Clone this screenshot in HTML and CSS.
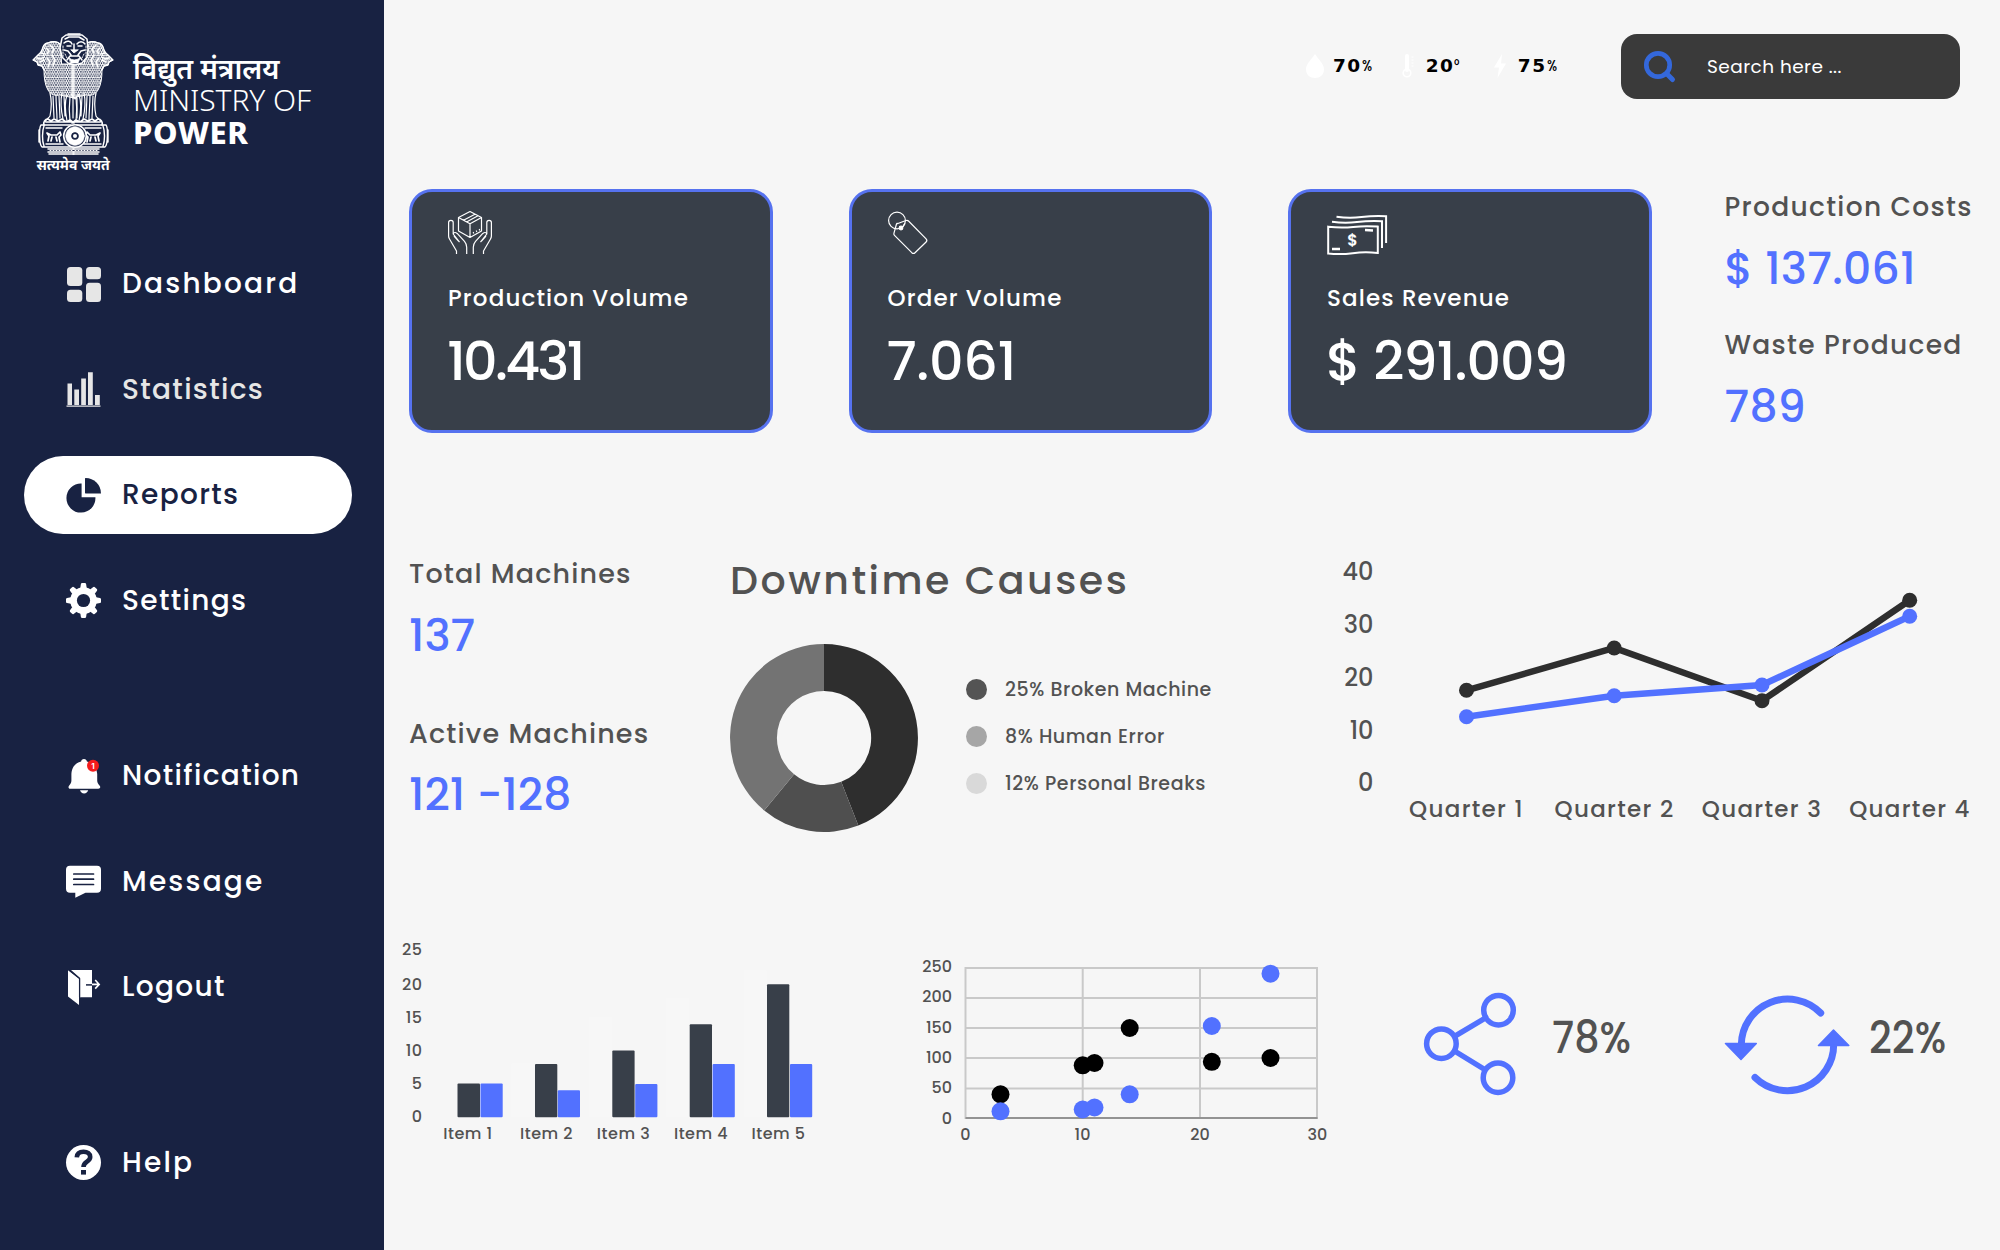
FILE: index.html
```html
<!DOCTYPE html>
<html lang="en">
<head>
<meta charset="utf-8">
<title>Ministry of Power – Reports</title>
<link rel="stylesheet" href="styles.css">
</head>
<body>
<aside class="sidebar">
  <header class="brand">
    <div class="emblem">
      <svg class="emblem-art" viewBox="0 0 80 121" fill="none" stroke="#fff" stroke-width="1" stroke-linecap="round" stroke-linejoin="round">
        <defs>
          <pattern id="fur" width="4.6" height="4.4" patternUnits="userSpaceOnUse">
            <path d="M0 .4q1.6 3.4 2.3 0q.7 3.4 2.3 0M-1.2 2.6q1.8 3.4 2.4 0q1 3.4 2.3 0q.7 3.4 2.3 0" stroke="#fff" stroke-width=".95" fill="none"/>
          </pattern>
          <g id="lion-side">
            <path d="M27 10c-3-3-8-3-12-1c-3 0-5 3-6 7c-1 3-3 4-5 6l-4 4l4 2l1 3l4 1l2 4c0 8 1 15 4 20c3 5 7 6 12 5l14 3V30H29z" fill="url(#fur)"/>
            <path d="M27 10c-3-3-8-3-12-1c-3 0-5 3-6 7c-1 3-3 4-5 6l-4 4l4 2l1 3l4 1l2 4" stroke-width="1.3"/>
            <path d="M4 24l4 1l3-2M8 19l4 1M7 28l4-2M13 14l3 3l-2 3M17 11l4 4l-2 4M14 24l3 4l-2 5M19 21l3 5l-2 6" stroke-width="1.5"/>
            <path d="M17 59c2 8 2 13 0 23c-1 2-4 3-5 6M23 61c0 10 1 16 1 25M29 59c-2 9-1 17 1 26M20 62l1 22M26 62l1 22M34 61c-3 8-2 16 0 26M37 63c-1 8-1 15 0 24M31 62l1 20" stroke-width="1.2"/>
            <path d="M11 91c-1-3 1-6 4-6l3 2l3-2l4 2l4-2l4 3l4-2l4 3M13 88h26" stroke-width="1.6"/>
          </g>
          <g id="base-side">
            <path d="M8 91h30M8 91c-2 2-2 20 1 22h31M6 96v12M11 92c-2 5-2 15 0 20M13 94h16M13 110h17" stroke-width="1.4"/>
            <path d="M15 107l1-5l-2-3l4 2h6l3-3l1 3l-2 2l1 5M18 107l1-4M23 103l1 4" stroke-width="1.7"/>
            <path d="M15 115h26M15 118h26M16 120h25" stroke-width="1.5"/>
            <path d="M17 116.500h24" stroke-dasharray="1 2"/>
          </g>
        </defs>
        <use href="#lion-side"/>
        <use href="#lion-side" transform="matrix(-1 0 0 1 82 0) translate(2)"/>
        <g>
          <path d="M29 4l4-3h16l5 4l1 10l-1 8l-5 6l-7 2l-7-2l-6-6l-2-9z" fill="#182242" stroke-width="1.5"/>
          <path d="M35 0h12M32 5l4-2h10l5 3M31 9c3-3 7-2 8 1M44 10c2-3 6-3 8 0M34 12h4M45 12h4M31 16l4 1l3 4M52 16l-4 1l-3 4M41 10v6M34 26l3-4h9l3 4" stroke-width="1.5"/>
          <path d="M38 16l3 3l4-3zM36 24q5 4 11 0l-2 5h-7z" fill="#fff" stroke-width=".8"/>
          <path d="M30 12v11M53 12v11M32 20l2 4M51 20l-2 4" stroke-dasharray="1.500 1.500"/>
        </g>
        <path d="M38 60l4 5l4-5M40 64v20M44 64v20" stroke-width="1.200"/>
        <use href="#base-side"/>
        <use href="#base-side" transform="matrix(-1 0 0 1 82 0) translate(1)"/>
        <circle cx="42" cy="102" r="11.300" fill="#182242" stroke-width="1.600"/>
        <circle cx="42" cy="102" r="6.500" stroke-width="5.500" stroke-dasharray=".5 1.200"/>
        <circle cx="42" cy="102" r="9.400" stroke-width=".6"/>
        <circle cx="42" cy="102" r="2" fill="#fff" stroke="none"/>
      </svg>
      <span class="motto">सत्यमेव जयते</span>
    </div>
    <div class="ministry">
      <span class="ministry-hi">विद्युत मंत्रालय</span>
      <span class="ministry-en">MINISTRY OF</span>
      <span class="ministry-power">POWER</span>
    </div>
  </header>

  <nav class="nav">
    <div class="nav-group">
      <a class="nav-item">
        <svg class="nav-icon" viewBox="0 0 35 35" fill="#e6e6e6"><rect x="1" y="0" width="15.300" height="19" rx="3.500"/><rect x="20" y="0" width="15" height="12.300" rx="3.500"/><rect x="1" y="22.700" width="15.300" height="12.300" rx="3.500"/><rect x="20" y="15.700" width="15" height="19.300" rx="3.500"/></svg>
        <span class="track-wide">Dashboard</span>
      </a>
      <a class="nav-item nav-item-dim">
        <svg class="nav-icon" viewBox="0 0 35 35" fill="#e6e6e6"><path d="M1.500 11.500h4.500V33H1.500zM8.300 17.500h4.700V33H8.300zM15.200 6.500h4.700V33h-4.700zM22 .3h4.800V33H22zM29 23h4.800v10H29zM.500 33.500h34v1.200H.500z"/></svg>
        <span>Statistics</span>
      </a>
      <a class="nav-item nav-item-active">
        <svg class="nav-icon" viewBox="0 0 35 35" fill="#182242"><path d="M15.600 5.600v13.600h13.800A14.500 14.500 0 1 1 15.600 5.600z"/><path d="M19.600 0A15.400 15.400 0 0 1 35 15.400H19.600q-.6 0-.6-.6V.6q0-.6.6-.6z"/></svg>
        <span>Reports</span>
      </a>
      <a class="nav-item">
        <svg class="nav-icon" viewBox="0 0 35 35"><g fill="#fff"><circle cx="17.500" cy="17.500" r="13.300"/><g id="teeth"><path id="tooth" d="M14.300 5l.6-4q.2-1 1.200-1h2.800q1 0 1.200 1l.6 4zM14.300 30l.6 4q.2 1 1.200 1h2.800q1 0 1.200-1l.6-4z"/><use href="#tooth" transform="rotate(45 17.500 17.500)"/><use href="#tooth" transform="rotate(90 17.500 17.500)"/><use href="#tooth" transform="rotate(135 17.500 17.500)"/></g></g><circle cx="17.500" cy="17.500" r="6.600" fill="#182242"/></svg>
        <span>Settings</span>
      </a>
    </div>
    <div class="nav-group">
      <a class="nav-item">
        <svg class="nav-icon" viewBox="0 0 35 35"><path d="M18 0c1.700 0 2.700 1 2.900 2.400c6.500 1.600 9.700 6.300 10.300 12.600v6.500c0 2 1 3.400 2.500 5.200c1.200 1.600.3 3-1.400 3H4.200c-1.700 0-2.200-1.600-1.200-3c1.500-1.800 2.400-3.200 2.400-5.200V15C5.800 8.600 9 4 15.100 2.400C15.300 1 16.300 0 18 0zM14 31.200h8.200c-.6 2-2 3.200-4.100 3.200S14.600 33.200 14 31.200z" fill="#fff"/><circle cx="27" cy="6.700" r="6" fill="#f41c1c"/><text class="badge-num" x="27" y="9.800" text-anchor="middle">1</text></svg>
        <span>Notification</span>
      </a>
      <a class="nav-item">
        <svg class="nav-icon" viewBox="0 0 35 35"><path d="M4 1.700h27q4 0 4 4v19q0 4-4 4H19.500L9.300 33.800v-5.100H4q-4 0-4-4v-19q0-4 4-4z" fill="#fff"/><path d="M7.800 10h19.700M7.800 15.200h19.700M7.800 20.500h19.700" stroke="#182242" stroke-width="1.700" stroke-linecap="round"/></svg>
        <span class="track-wide">Message</span>
      </a>
      <a class="nav-item">
        <svg class="nav-icon" viewBox="0 0 35 35"><path d="M5 0h21v27.300H14V8z" fill="#fff"/><path d="M2 0l11 8.600V35L2 26.500z" fill="#fff"/><path d="M2.500-.2L13.600 8.500V27" fill="none" stroke="#182242" stroke-width="1.300"/><path d="M20 14.900h6" stroke="#182242" stroke-width="1.500"/><path d="M26 14.400h7M29.200 10l4 4.400l-4 4.200" fill="none" stroke="#fff" stroke-width="1.600"/></svg>
        <span>Logout</span>
      </a>
    </div>
    <div class="nav-group">
      <a class="nav-item">
        <svg class="nav-icon" viewBox="0 0 35 35"><circle cx="17.500" cy="17.500" r="17.500" fill="#fff"/><path d="M10.800 12.300c.3-4.200 3-5.500 6.700-5.500c4 0 6.700 1.900 6.700 5.200c0 5.200-6.700 4.200-6.700 10" fill="none" stroke="#182242" stroke-width="4.600"/><path d="M15 25h5v4.600h-5z" fill="#182242"/></svg>
        <span class="track-wide">Help</span>
      </a>
    </div>
  </nav>
</aside>

<main class="main">
  <div class="topbar">
    <div class="weather">
      <div class="reading"><svg class="reading-icon" viewBox="0 0 18 24" fill="#fff"><path d="M9 0c3 5 9 9.500 9 15.500C18 20.500 14 24 9 24S0 20.500 0 15.500C0 9.500 6 5 9 0z"/></svg><b>70</b><small>%</small></div>
      <div class="reading reading-temp"><svg class="reading-icon" viewBox="0 0 18 24"><path d="M8 2v14" stroke="#fff" stroke-width="4" stroke-linecap="round"/><circle cx="8" cy="19" r="3.800" fill="none" stroke="#fff" stroke-width="1.600"/><path d="M12.500 3h2M12.500 6h2M12.500 9h2M12.500 12h2" stroke="#fff"/></svg><b>20</b><small>°</small></div>
      <div class="reading"><svg class="reading-icon" viewBox="0 0 18 24" fill="#fff"><path d="M11 0L3 13.500h5L6.500 24L15 9.500h-5z"/></svg><b>75</b><small>%</small></div>
    </div>
    <div class="search">
      <svg class="search-icon" viewBox="0 0 32 32" fill="none" stroke="#3468db"><circle cx="14" cy="14" r="11.700" stroke-width="4.700"/><path d="M23 23l5.500 5.500" stroke-width="5" stroke-linecap="round"/></svg>
      <span>Search here ...</span>
    </div>
  </div>

  <section class="cards">
    <article class="card">
      <svg class="card-icon" viewBox="0 0 46 50" fill="none" stroke="#fff" stroke-width="1.200" stroke-linejoin="round">
        <path d="M22 3.500l11.500 6v13.500L22 29.500L10.500 23V9.500zM10.500 9.500L22 15.700l11.500-6.200M22 15.700v13.800M15 12.500l12-6.300M18.500 14L30 7.700"/><path d="M25 25l1-.5M28 23.500l1-.5M31 22l1-.5" stroke-width="1.500"/>
        <g id="hand"><path d="M8.500 46v-3L1.500 31q-.9-1.500-.9-3V14.500q0-2.200 2.300-2.200t2.300 2.200V26l6.300 8.200M5.200 26q1.200-2.700 4-.6l7.300 7.900q2.200 2.600 2.200 6V46M6 28l4.500 5"/></g>
        <use href="#hand" transform="matrix(-1 0 0 1 44 0)"/>
      </svg>
      <h2>Production Volume</h2>
      <p class="value-ones">10.431</p>
    </article>
    <article class="card">
      <svg class="card-icon" viewBox="0 0 46 50" fill="none" stroke="#fff" stroke-width="1.200" stroke-linejoin="round">
        <circle cx="9" cy="12.500" r="8.400"/><path d="M8.500 16L18 12.500q1.500-.5 2.500.5l17.600 17.800q1.500 1.700 0 3.200L27 44.700q-1.500 1.500-3.200 0L6.500 27.300q-.8-.8-.6-2zq.3-.8 1-1" /><circle cx="13" cy="20" r="1.800" fill="#fff"/><path d="M13 20q2.500-1 4-4.500"/>
      </svg>
      <h2>Order Volume</h2>
      <p>7.061</p>
    </article>
    <article class="card">
      <svg class="card-icon card-icon-cash" viewBox="0 0 62 50" fill="none" stroke="#fff" stroke-width="2">
        <path d="M1 19q12-1.500 24 0t25-1v35"  stroke="none"/>
        <path d="M1.200 19.500q12 2 24 0t25-1v35.500" stroke="none"/>
        <path d="M1.200 18.700q13 1.500 25 .2t24.600-.3V45q-13-1.400-25 .2t-24.600 .4z"/>
        <path d="M5 13.800q13 1.600 25 .2t25-.8V40"/><path d="M9.500 8.800q13 1.600 25 .2t24.600-.8V35"/>
        <path d="M38 22l8 .5M5 41h8" stroke-width="2.400"/>
        <text class="cash-sign" x="25.500" y="38" text-anchor="middle">$</text>
      </svg>
      <h2>Sales Revenue</h2>
      <p class="value-money">$ 291.009</p>
    </article>
    <div class="metrics metrics-costs">
      <h3>Production Costs</h3>
      <p>$ 137.061</p>
      <h3>Waste Produced</h3>
      <p>789</p>
    </div>
  </section>

  <section class="insights">
    <div class="metrics metrics-machines">
      <h3>Total Machines</h3>
      <p>137</p>
      <h3>Active Machines</h3>
      <p>121 -128</p>
    </div>
    <div class="downtime">
      <h1>Downtime Causes</h1>
      <div class="downtime-body">
        <svg class="donut" viewBox="-94 -94 188 188">
          <path d="M0-94A94 94 0 0 1 34.300 87.500L17.200 43.800A47 47 0 0 0 0-47z" fill="#2e2e2e"/>
          <path d="M34.300 87.500A94 94 0 0 1-59.800 72.500L-29.900 36.300A47 47 0 0 0 17.200 43.800z" fill="#4f4f4f"/>
          <path d="M-59.800 72.500A94 94 0 0 1 0-94V-47A47 47 0 0 0-29.900 36.300z" fill="#737373"/>
        </svg>
        <ul class="legend">
          <li><i class="dot dot-dark"></i>25% Broken Machine</li>
          <li><i class="dot dot-mid"></i>8% Human Error</li>
          <li><i class="dot dot-light"></i>12% Personal Breaks</li>
        </ul>
      </div>
    </div>
    <svg class="chart line-chart" viewBox="1330 550 650 290">
      <g class="axis axis-y" text-anchor="end"><text x="1373.500" y="580">40</text><text x="1373.500" y="633">30</text><text x="1373.500" y="686">20</text><text x="1373.500" y="738.500">10</text><text x="1373.500" y="790.500">0</text></g>
      <g class="axis axis-x" text-anchor="middle"><text x="1466.500" y="817.300">Quarter 1</text><text x="1614.500" y="817.300">Quarter 2</text><text x="1762" y="817.300">Quarter 3</text><text x="1910" y="817.300">Quarter 4</text></g>
      <g fill="#2e2e2e"><path d="M1466.500 690.300L1614.200 648L1762 700.700L1909.700 600.300" fill="none" stroke="#2e2e2e" stroke-width="6.500"/><circle cx="1466.500" cy="690.300" r="7.500"/><circle cx="1614.200" cy="648" r="7.500"/><circle cx="1762" cy="700.700" r="7.500"/><circle cx="1909.700" cy="600.300" r="7.500"/></g>
      <g fill="#5271ff"><path d="M1466.500 716.700L1614.200 695.700L1762 685L1909.700 616.300" fill="none" stroke="#5271ff" stroke-width="6.500"/><circle cx="1466.500" cy="716.700" r="7.500"/><circle cx="1614.200" cy="695.700" r="7.500"/><circle cx="1762" cy="685" r="7.500"/><circle cx="1909.700" cy="616.300" r="7.500"/></g>
    </svg>
  </section>

  <section class="bottom">
    <svg class="chart bar-chart" viewBox="395 930 430 220">
      <g class="tick" text-anchor="end"><text x="422.500" y="955">25</text><text x="422.500" y="989.500">20</text><text x="422.500" y="1022.500">15</text><text x="422.500" y="1055.500">10</text><text x="422.500" y="1088.500">5</text><text x="422.500" y="1121.500">0</text></g>
      <g fill="#f7f7f7"><path d="M511.500 1063.500h22.500v53.800h-22.500zM589 1017h22.500v100.300H589zM666.500 998h22.500v119.300h-22.500zM744 970.500h22.500v146.800H744z"/></g>
      <g fill="#383f49"><rect x="457.500" y="1083.500" width="22.500" height="33.800" rx="1"/><rect x="535" y="1063.900" width="22.300" height="53.400" rx="1"/><rect x="612.300" y="1050.500" width="22.300" height="66.800" rx="1"/><rect x="689.700" y="1024.200" width="22.300" height="93.100" rx="1"/><rect x="767" y="984.200" width="22.300" height="133.100" rx="1"/></g>
      <g fill="#5271ff"><rect x="480.500" y="1083.500" width="22.200" height="33.800" rx="1"/><rect x="557.800" y="1090.300" width="22.200" height="27" rx="1"/><rect x="635.200" y="1084" width="22.200" height="33.300" rx="1"/><rect x="712.600" y="1064" width="22.200" height="53.300" rx="1"/><rect x="790" y="1064" width="22.200" height="53.300" rx="1"/></g>
      <g class="tick" text-anchor="middle"><text x="468" y="1139">Item 1</text><text x="546.500" y="1139">Item 2</text><text x="623.500" y="1139">Item 3</text><text x="701" y="1139">Item 4</text><text x="778.500" y="1139">Item 5</text></g>
    </svg>
    <svg class="chart scatter-chart" viewBox="915 950 420 200">
      <g stroke="#c9c9c9" stroke-width="2" fill="none"><path d="M965.500 968H1317.500M965.500 998H1317.500M965.500 1028H1317.500M965.500 1058H1317.500M965.500 1088.500H1317.500"/><path d="M965.500 967V1119M1082.700 967V1119M1200 967V1119M1317 967V1119"/></g>
      <path d="M965.500 1118H1317.500" stroke="#939393" stroke-width="2"/>
      <g class="tick" text-anchor="end"><text x="952" y="972.300">250</text><text x="952" y="1002.300">200</text><text x="952" y="1033">150</text><text x="952" y="1063">100</text><text x="952" y="1093">50</text><text x="952" y="1123.500">0</text></g>
      <g class="tick" text-anchor="middle"><text x="965.500" y="1140">0</text><text x="1082.500" y="1140">10</text><text x="1200" y="1140">20</text><text x="1317.500" y="1140">30</text></g>
      <g fill="#000"><circle cx="1000.500" cy="1094.300" r="9"/><circle cx="1082.700" cy="1065.300" r="9"/><circle cx="1094.500" cy="1063" r="9"/><circle cx="1129.700" cy="1028" r="9"/><circle cx="1211.800" cy="1061.800" r="9"/><circle cx="1270.500" cy="1058" r="9"/></g>
      <g fill="#5271ff"><circle cx="1000.500" cy="1111.300" r="9"/><circle cx="1082.700" cy="1109.500" r="9"/><circle cx="1094.500" cy="1107.500" r="9"/><circle cx="1129.700" cy="1094.300" r="9"/><circle cx="1211.800" cy="1026" r="9"/><circle cx="1270.500" cy="973.700" r="9"/></g>
    </svg>
    <div class="rate rate-share">
      <svg class="rate-icon" viewBox="1422 992 96 104" fill="none" stroke="#5271ff" stroke-width="5.500"><circle cx="1441.400" cy="1043.700" r="14.800"/><circle cx="1498.500" cy="1010.200" r="14.800"/><circle cx="1498" cy="1077.700" r="14.800"/><path d="M1454.500 1036.300L1485.500 1018M1454.500 1051L1485.500 1070"/></svg>
      <span>78%</span>
    </div>
    <div class="rate rate-cycle">
      <svg class="rate-icon rate-icon-cycle" viewBox="1723 992 130 104" fill="none" stroke="#5271ff" stroke-width="7"><path d="M1820.700 1013A46.300 46.300 0 0 0 1741.300 1045M1755 1077.500A46.300 46.300 0 0 0 1833.700 1044" stroke-linecap="round"/><path d="M1725.500 1043.500H1756.300L1741 1059.500zM1818.500 1045.500H1848.800L1833.500 1030z" fill="#5271ff" stroke-width="1.500" stroke-linejoin="round"/></svg>
      <span>22%</span>
    </div>
  </section>
</main>
</body>
</html>
```
FILE: styles.css
```css
* { box-sizing: border-box; margin: 0; padding: 0; }

body {
  display: flex;
  width: 2000px;
  height: 1250px;
  overflow: hidden;
  background: #f6f6f6;
  color: #525252;
  font-family: Poppins, Inter, sans-serif;
  font-weight: 500;
  font-feature-settings: "cv11";
}

svg { display: block; flex: none; overflow: visible; }
h1, h2, h3 { font-weight: 500; white-space: nowrap; }
p, span { white-space: nowrap; }

/* Sidebar */
.sidebar {
  flex: none;
  width: 384px;
  padding-top: 34px;
  background: #182242;
  color: #fff;
}

.brand { display: flex; height: 211px; padding-left: 33px; }
.emblem { width: 80px; }
.emblem-art { width: 80px; height: 121px; }
.motto {
  display: block;
  margin-top: -1px;
  font: 700 14px/22px "Noto Sans", sans-serif;
  text-align: center;
}
.ministry {
  display: flex;
  flex-direction: column;
  padding: 18px 0 0 20px;
  font-family: "Noto Sans", sans-serif;
  line-height: 32px;
}
.ministry-hi { font-size: 28px; font-weight: 600; }
.ministry-en { font-size: 30px; font-weight: 300; letter-spacing: -.1px; }
.ministry-power { font-size: 31px; font-weight: 800; letter-spacing: .6px; }

.nav-group { display: flex; flex-direction: column; gap: 27.500px; }
.nav-group + .nav-group { margin-top: 97.500px; }
.nav-item {
  display: flex;
  align-items: center;
  gap: 21px;
  width: 328px;
  height: 78px;
  margin-left: 24px;
  padding-left: 42px;
  border-radius: 39px;
  font-size: 28px;
  letter-spacing: 1.350px;
}
.nav-item-dim { color: #e6e6e6; }
.nav-item-active { background: #fff; color: #182242; }
.nav-icon { width: 35px; height: 35px; }
.badge-num { fill: #fff; font: 700 8px Inter, sans-serif; letter-spacing: 0; }
.track-wide { letter-spacing: 2.200px; }

/* Main area */
.main { flex: 1; padding: 34px 0 0 25px; }

.topbar { display: flex; height: 155px; align-items: flex-start; }
.weather { display: flex; gap: 25px; width: 315px; margin-left: 897px; padding-top: 20px; }
.reading { display: flex; align-items: center; height: 24px; color: #000; }
.reading-icon { width: 18px; height: 24px; margin-right: 9px; }
.reading b { font: 700 18.500px/24px "DejaVu Sans", sans-serif; letter-spacing: 1.500px; }
.reading small { font-size: 15px; line-height: 24px; transform: scaleX(.85); transform-origin: left; }
.reading-temp small { margin-right: 5px; }
.search {
  display: flex;
  align-items: center;
  width: 338.500px;
  height: 65px;
  padding-left: 23px;
  border-radius: 16px;
  background: #3a3a3a;
  color: #fff;
  font-size: 18.500px;
  font-weight: 400;
  letter-spacing: .450px;
}
.search-icon { width: 32px; height: 32px; margin-right: 31px; }

/* KPI cards */
.cards { display: flex; gap: 76px; height: 367px; }
.card {
  width: 363.500px;
  height: 244px;
  padding: 16px 0 0 36px;
  border: 3px solid #5672ef;
  border-radius: 23px;
  background: #383f49;
  color: #fff;
}
.card-icon { width: 46px; height: 50px; }
.card-icon-cash { width: 62px; }
.cash-sign { fill: #fff; stroke: none; font-size: 16px; font-weight: 600; }
.card h2 { margin-top: 23px; font-size: 23px; line-height: 34px; letter-spacing: 1.150px; }
.card p { margin: 14px 0 0 -1px; font-size: 54px; line-height: 64px; letter-spacing: -.400px; }
.card .value-ones { letter-spacing: -2.800px; }
.card .value-money { letter-spacing: -1px; }

.metrics h3 { font-size: 27px; line-height: 36px; }
.metrics p { margin-top: 18.500px; color: #5271ff; font-size: 44px; line-height: 50px; white-space: pre; }
.metrics-costs h3 { font-size: 26.500px; letter-spacing: 1.300px; }
.metrics-costs { margin-left: -3px; }
.metrics-costs p + h3 { margin-top: 33.500px; }
.metrics-costs p { letter-spacing: .3px; }
.metrics-machines h3 { letter-spacing: 1.150px; }
.metrics-machines p + h3 { margin-top: 55px; }

/* Machines, downtime, quarterly lines */
.insights { display: flex; height: 374px; }
.metrics-machines { width: 321px; }
.downtime { width: 600px; }
.downtime h1 { font-size: 39.500px; line-height: 50px; letter-spacing: 2.500px; }
.downtime-body { display: flex; gap: 48px; padding-top: 38px; }
.donut { width: 188px; height: 188px; }
.legend { padding-top: 22.500px; list-style: none; }
.legend li { display: flex; align-items: center; height: 46.700px; font-size: 19px; letter-spacing: .580px; }
.dot { width: 21px; height: 21px; margin-right: 18px; border-radius: 50%; }
.dot-dark { background: #545454; }
.dot-mid { background: #a6a6a6; }
.dot-light { background: #d9d9d9; }

.chart text { fill: #525252; }
.line-chart { width: 650px; height: 290px; margin-top: -6px; }
.axis-y { font-size: 24px; }
.axis-x { font-size: 23px; letter-spacing: 1.300px; }
.tick { font-size: 16px; }
.bar-chart .tick { letter-spacing: .5px; }

/* Bar, scatter, rates */
.bottom { display: flex; }
.bar-chart { width: 430px; height: 220px; margin-left: -14px; }
.scatter-chart { width: 420px; height: 200px; margin: 20px 0 0 90px; }
.rate { display: flex; height: 104px; margin-top: 62px; font-size: 44px; line-height: 92px; }
.rate span { transform: scaleX(.9); transform-origin: left; }
.rate-share { width: 301px; margin-left: 87px; }
.rate-icon { width: 96px; height: 104px; margin-right: 34px; }
.rate-icon-cycle { width: 130px; margin-right: 16px; }
```
